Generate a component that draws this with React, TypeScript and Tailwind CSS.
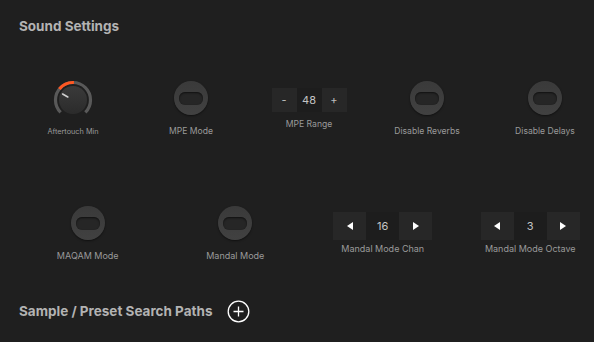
import React from 'react';

const pt = (cx: number, cy: number, r: number, deg: number) => {
  const a = (deg * Math.PI) / 180;
  return [cx + r * Math.sin(a), cy - r * Math.cos(a)];
};

const arc = (cx: number, cy: number, r: number, from: number, to: number) => {
  const [x1, y1] = pt(cx, cy, r, from);
  const [x2, y2] = pt(cx, cy, r, to);
  const large = to - from > 180 ? 1 : 0;
  return `M ${x1} ${y1} A ${r} ${r} 0 ${large} 1 ${x2} ${y2}`;
};

const Knob = () => {
  const [lx1, ly1] = pt(20, 20, 6, -60);
  const [lx2, ly2] = pt(20, 20, 12, -60);
  return (
    <svg width="40" height="40" viewBox="0 0 40 40">
      <defs>
        <linearGradient id="kb" x1="0" y1="0" x2="0" y2="1">
          <stop offset="0" stopColor="#3a3a3a" />
          <stop offset="1" stopColor="#2b2b2b" />
        </linearGradient>
      </defs>
      <path d={arc(20, 20, 17.5, -135, 135)} stroke="#595959" strokeWidth="3.2" fill="none" />
      <path d={arc(20, 20, 17.5, -51, 3)} stroke="#ff5722" strokeWidth="3.2" fill="none" />
      <circle cx="20" cy="20" r="14" fill="url(#kb)" />
      <line x1={lx1} y1={ly1} x2={lx2} y2={ly2} stroke="#d0d0d0" strokeWidth="1.6" strokeLinecap="round" />
    </svg>
  );
};

const Toggle = () => (
  <div className="w-[34px] h-[34px] rounded-full bg-gradient-to-b from-[#3a3a3a] to-[#414141] flex items-center justify-center shadow-[0_1px_2px_rgba(0,0,0,0.5)]">
    <div className="w-[24px] h-[13px] rounded-[6px] bg-[#262626] shadow-[inset_0_1px_2px_rgba(0,0,0,0.6)]" />
  </div>
);

const Tri = ({ dir }: { dir: 'l' | 'r' }) => (
  <svg width="6" height="8" viewBox="0 0 6 8">
    <path d={dir === 'l' ? 'M6 0 L0 4 L6 8 Z' : 'M0 0 L6 4 L0 8 Z'} fill="#ffffff" />
  </svg>
);

const Label = ({ text, className }: { text: string; className?: string }) => (
  <div className={`leading-[10px] text-[#9a9a9a] whitespace-nowrap ${className ?? ''}`}>{text}</div>
);

const Cell = ({ children }: { children: React.ReactNode }) => (
  <div className="flex-1 flex flex-col items-center">{children}</div>
);

export default function App() {
  return (
    <div className="w-[594px] h-[342px] bg-[#1f1f1f] overflow-hidden font-['Inter',sans-serif]">
      <div className="pt-[18px] pl-[19px] text-[13.5px] leading-[16px] font-bold text-[#b3b3b3]">Sound Settings</div>

      <div className="mt-[46px] ml-[14px] w-[590px] h-[126px] flex">
        <Cell>
          <Knob />
          <Label text="Aftertouch Min" className="mt-[7px] text-[7.3px]" />
        </Cell>
        <Cell>
          <div className="mt-[1px]"><Toggle /></div>
          <Label text="MPE Mode" className="mt-[11px] text-[8.6px]" />
        </Cell>
        <Cell>
          <div className="mt-[8px] flex h-[24px]">
            <div className="w-[25px] bg-[#272727] flex items-center justify-center text-[11px] text-[#bdbdbd]">-</div>
            <div className="w-[25px] bg-[#1d1d1d] flex items-center justify-center text-[11px] text-[#c4c4c4]">48</div>
            <div className="w-[25px] bg-[#272727] flex items-center justify-center text-[11px] text-[#bdbdbd]">+</div>
          </div>
          <Label text="MPE Range" className="mt-[7px] text-[8.6px]" />
        </Cell>
        <Cell>
          <div className="mt-[1px]"><Toggle /></div>
          <Label text="Disable Reverbs" className="mt-[11px] text-[8.6px]" />
        </Cell>
        <Cell>
          <div className="mt-[1px]"><Toggle /></div>
          <Label text="Disable Delays" className="mt-[11px] text-[8.6px]" />
        </Cell>
      </div>

      <div className="ml-[14px] w-[590px] h-[94px] flex">
        <Cell>
          <Toggle />
          <Label text="MAQAM Mode" className="mt-[11px] text-[9px]" />
        </Cell>
        <Cell>
          <Toggle />
          <Label text="Mandal Mode" className="mt-[11px] text-[9px]" />
        </Cell>
        <Cell>
          <div className="mt-[6px] flex h-[28px]">
            <div className="w-[33px] bg-[#272727] flex items-center justify-center"><Tri dir="l" /></div>
            <div className="w-[33px] bg-[#1d1d1d] flex items-center justify-center text-[11px] text-[#c4c4c4]">16</div>
            <div className="w-[33px] bg-[#272727] flex items-center justify-center"><Tri dir="r" /></div>
          </div>
          <Label text="Mandal Mode Chan" className="mt-[4px] text-[9px]" />
        </Cell>
        <Cell>
          <div className="mt-[6px] flex h-[28px]">
            <div className="w-[33px] bg-[#272727] flex items-center justify-center"><Tri dir="l" /></div>
            <div className="w-[33px] bg-[#1d1d1d] flex items-center justify-center text-[11px] text-[#c4c4c4]">3</div>
            <div className="w-[33px] bg-[#272727] flex items-center justify-center"><Tri dir="r" /></div>
          </div>
          <Label text="Mandal Mode Octave" className="mt-[4px] text-[9px]" />
        </Cell>
      </div>

      <div className="pl-[19px] h-[22px] flex items-center gap-[15px]">
        <div className="text-[13.5px] leading-[16px] font-bold text-[#b3b3b3]">Sample / Preset Search Paths</div>
        <svg width="23" height="23" viewBox="0 0 23 23">
          <circle cx="11.5" cy="11.5" r="10.3" stroke="#ffffff" strokeWidth="1.3" fill="none" />
          <path d="M11.5 6.5 V16.5 M6.5 11.5 H16.5" stroke="#ffffff" strokeWidth="1.3" />
        </svg>
      </div>
    </div>
  );
}
